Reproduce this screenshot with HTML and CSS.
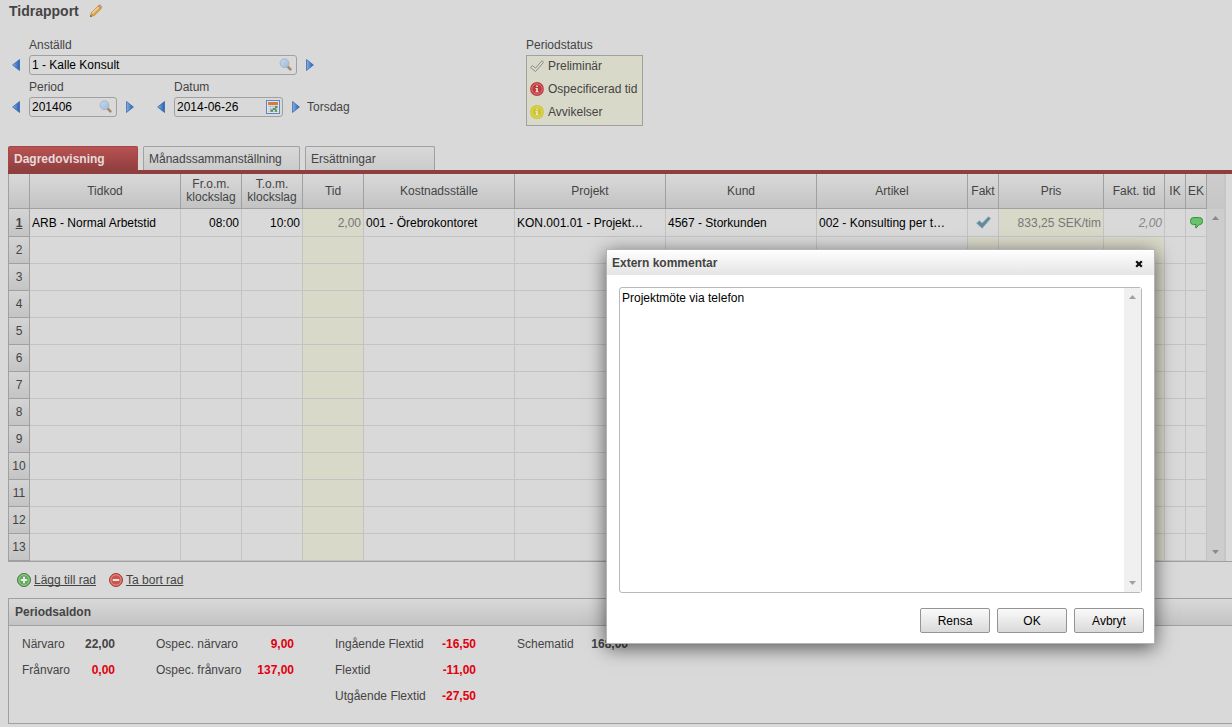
FILE: index.html
```html
<!DOCTYPE html>
<html lang="sv">
<head>
<meta charset="utf-8">
<title>Tidrapport</title>
<link rel="stylesheet" href="styles.css">
</head>
<body>
<svg class="defs" aria-hidden="true">
  <defs>
    <linearGradient id="blue" x1="0" x2="1"><stop offset="0" stop-color="#86b0dd"/><stop offset="1" stop-color="#2560b4"/></linearGradient>
    <linearGradient id="glass" x1="0" y1="0" x2="1" y2="1"><stop offset="0" stop-color="#c6d9ea"/><stop offset="1" stop-color="#9dbcdc"/></linearGradient>
    <symbol id="prev" viewBox="0 0 8 12"><path d="M7.5.5v11L.6 6z" fill="url(#blue)" stroke="#2d62ad" stroke-width=".7"/></symbol>
    <symbol id="next" viewBox="0 0 8 12"><path d="M.5.5v11L7.4 6z" fill="url(#blue)" stroke="#2d62ad" stroke-width=".7"/></symbol>
    <symbol id="search" viewBox="0 0 14 14"><path d="M9 8.800l2.400 2.600" stroke="#a88a68" stroke-width="2.600" stroke-linecap="round"/><circle cx="5.500" cy="5.200" r="4.400" fill="url(#glass)" stroke="#a3b5cc" stroke-width="1"/></symbol>
    <symbol id="up" viewBox="0 0 7 4"><path d="M0 4L3.500 0 7 4z" fill="currentColor"/></symbol>
    <symbol id="down" viewBox="0 0 7 4"><path d="M0 0l3.500 4L7 0z" fill="currentColor"/></symbol>
    <symbol id="info" viewBox="0 0 14 14"><circle cx="7" cy="7" r="6.900" fill="currentColor"/><circle cx="7" cy="7" r="5.200" fill="none" stroke="#fff" stroke-opacity=".4" stroke-width=".8"/><path d="M6.200 3.400h1.600v1.500H6.200zM5.500 5.900h2.300v3.300h.8v1H5.400v-1h.8V7h-.7z" fill="#e4e4dc"/></symbol>
  </defs>
</svg>

<header class="page-title">
  <h1>Tidrapport</h1>
  <svg class="pencil" viewBox="0 0 14 14"><path d="M1.300 12.700l1.200-4L9 2.200c.9-.7 3.600 1.700 2.900 2.700L5.300 11.400z" fill="#dba94f" stroke="#b5853f" stroke-width=".8"/><path d="M3.300 9.300L9.500 3.300" stroke="#f0d596" stroke-width="1.400"/><path d="M9 2.100l1-1c1-.8 3.500 1.300 2.700 2.400l-.9 1.200C11.700 3.600 10.300 2.200 9 2.100z" fill="#d3a488" stroke="#ab8062" stroke-width=".6"/><path d="M1.300 12.700l.4-1.600 1.200 1.100z" fill="#4c4034"/></svg>
</header>

<section class="filters">
  <form class="selectors">
    <div class="stepper">
      <label for="employee">Anställd</label>
      <button class="step" type="button" aria-label="Föregående anställd"><svg><use href="#prev"/></svg></button>
      <div class="field field-wide"><input id="employee" value="1 - Kalle Konsult"><svg class="lens"><use href="#search"/></svg></div>
      <button class="step" type="button" aria-label="Nästa anställd"><svg><use href="#next"/></svg></button>
    </div>
    <div class="selector-row">
      <div class="stepper">
        <label for="period">Period</label>
        <button class="step" type="button" aria-label="Föregående period"><svg><use href="#prev"/></svg></button>
        <div class="field field-period"><input id="period" value="201406"><svg class="lens"><use href="#search"/></svg></div>
        <button class="step" type="button" aria-label="Nästa period"><svg><use href="#next"/></svg></button>
      </div>
      <div class="stepper">
        <label for="date">Datum</label>
        <button class="step" type="button" aria-label="Föregående dag"><svg><use href="#prev"/></svg></button>
        <div class="field field-date"><input id="date" value="2014-06-26"><svg class="calendar" viewBox="0 0 14 14"><rect x=".5" y=".5" width="13" height="13" fill="#dde4ea" stroke="#5f86bd"/><path d="M2 2h10v3H2z" fill="#d9783f"/><path d="M2 6.500h10M2 9h10M2 11.500h10M4.500 5v7M7 5v7M9.500 5v7" stroke="#b5bcc4" stroke-width=".7"/><path d="M9 6h2.500v2.300H9zM7 8h2.500v2H7zM4.500 9.500H7v2.300H4.500zM9 9.500h2v2.300H9z" fill="#4f9456"/></svg></div>
        <button class="step" type="button" aria-label="Nästa dag"><svg><use href="#next"/></svg></button>
      </div>
      <span class="weekday">Torsdag</span>
    </div>
  </form>
  <div class="status">
    <h2>Periodstatus</h2>
    <ul>
      <li><svg class="status-icon" viewBox="0 0 14 14"><path d="M.6 8.500l1.900-1.900 2.900 2.600L12 1.700l1.600 1.600-8.100 9.200z" fill="#dcdcd2" stroke="#8c8c88" stroke-width="1"/></svg>Preliminär</li>
      <li><svg class="status-icon red"><use href="#info"/></svg>Ospecificerad tid</li>
      <li><svg class="status-icon yellow"><use href="#info"/></svg>Avvikelser</li>
    </ul>
  </div>
</section>

<nav class="tabs">
  <button class="tab active" type="button">Dagredovisning</button>
  <button class="tab tab-wide" type="button">Månadssammanställning</button>
  <button class="tab" type="button">Ersättningar</button>
</nav>

<section class="grid">
  <table class="rows">
    <colgroup><col class="c-num"><col><col class="c-time"><col class="c-time"><col class="c-time"><col><col><col><col><col class="c-fakt"><col class="c-price"><col class="c-time"><col class="c-flag"><col class="c-flag"></colgroup>
    <thead>
      <tr><th></th><th>Tidkod</th><th>Fr.o.m. klockslag</th><th>T.o.m. klockslag</th><th>Tid</th><th>Kostnadsställe</th><th>Projekt</th><th>Kund</th><th>Artikel</th><th>Fakt</th><th>Pris</th><th>Fakt. tid</th><th>IK</th><th>EK</th></tr>
    </thead>
    <tbody>
      <tr class="current"><th>1</th><td>ARB - Normal Arbetstid</td><td class="num">08:00</td><td class="num">10:00</td><td class="num calc">2,00</td><td>001 - Örebrokontoret</td><td>KON.001.01 - Projekt…</td><td>4567 - Storkunden</td><td>002 - Konsulting per t…</td><td class="icon"><svg class="tick" viewBox="0 0 15 13"><path d="M.6 7.200L3.300 4.700l2.800 2.600L12.500.7l2.100 1.700-8.400 9.800z" fill="#5f8b9b" stroke="#87a8b2" stroke-width=".8"/></svg></td><td class="num calc">833,25 SEK/tim</td><td class="num estimate">2,00</td><td></td><td class="icon"><svg class="bubble" viewBox="0 0 13 12"><path d="M3.500.6h6a3 3 0 0 1 3 3v1a3 3 0 0 1-3 3H9L6.200 11l-.6-.2.400-3.200H3.500a3 3 0 0 1-3-3v-1a3 3 0 0 1 3-3z" fill="#6cc070" stroke="#2f9238"/></svg></td></tr>
      <tr><th>2</th><td></td><td></td><td></td><td class="calc"></td><td></td><td></td><td></td><td></td><td class="calc"></td><td class="calc"></td><td class="calc"></td><td></td><td></td></tr>
      <tr><th>3</th><td></td><td></td><td></td><td class="calc"></td><td></td><td></td><td></td><td></td><td class="calc"></td><td class="calc"></td><td class="calc"></td><td></td><td></td></tr>
      <tr><th>4</th><td></td><td></td><td></td><td class="calc"></td><td></td><td></td><td></td><td></td><td class="calc"></td><td class="calc"></td><td class="calc"></td><td></td><td></td></tr>
      <tr><th>5</th><td></td><td></td><td></td><td class="calc"></td><td></td><td></td><td></td><td></td><td class="calc"></td><td class="calc"></td><td class="calc"></td><td></td><td></td></tr>
      <tr><th>6</th><td></td><td></td><td></td><td class="calc"></td><td></td><td></td><td></td><td></td><td class="calc"></td><td class="calc"></td><td class="calc"></td><td></td><td></td></tr>
      <tr><th>7</th><td></td><td></td><td></td><td class="calc"></td><td></td><td></td><td></td><td></td><td class="calc"></td><td class="calc"></td><td class="calc"></td><td></td><td></td></tr>
      <tr><th>8</th><td></td><td></td><td></td><td class="calc"></td><td></td><td></td><td></td><td></td><td class="calc"></td><td class="calc"></td><td class="calc"></td><td></td><td></td></tr>
      <tr><th>9</th><td></td><td></td><td></td><td class="calc"></td><td></td><td></td><td></td><td></td><td class="calc"></td><td class="calc"></td><td class="calc"></td><td></td><td></td></tr>
      <tr><th>10</th><td></td><td></td><td></td><td class="calc"></td><td></td><td></td><td></td><td></td><td class="calc"></td><td class="calc"></td><td class="calc"></td><td></td><td></td></tr>
      <tr><th>11</th><td></td><td></td><td></td><td class="calc"></td><td></td><td></td><td></td><td></td><td class="calc"></td><td class="calc"></td><td class="calc"></td><td></td><td></td></tr>
      <tr><th>12</th><td></td><td></td><td></td><td class="calc"></td><td></td><td></td><td></td><td></td><td class="calc"></td><td class="calc"></td><td class="calc"></td><td></td><td></td></tr>
      <tr><th>13</th><td></td><td></td><td></td><td class="calc"></td><td></td><td></td><td></td><td></td><td class="calc"></td><td class="calc"></td><td class="calc"></td><td></td><td></td></tr>
    </tbody>
  </table>
  <div class="grid-side">
    <div class="grid-corner"></div>
    <div class="scrollbar"><svg><use href="#up"/></svg><svg><use href="#down"/></svg></div>
  </div>
</section>

<div class="row-actions">
  <a href="#add"><svg viewBox="0 0 14 14"><circle cx="7" cy="7" r="6.500" fill="#67a860" stroke="#3f7f3d"/><circle cx="7" cy="7" r="5.200" fill="none" stroke="#a8cfa2" stroke-width=".8"/><path d="M7 3.800v6.400M3.800 7h6.400" stroke="#e6eee4" stroke-width="2"/></svg><span>Lägg till rad</span></a>
  <a href="#remove"><svg viewBox="0 0 14 14"><circle cx="7" cy="7" r="6.500" fill="#cc564d" stroke="#a53c38"/><circle cx="7" cy="7" r="5.200" fill="none" stroke="#e2a098" stroke-width=".8"/><path d="M3.800 7h6.400" stroke="#f0e4e2" stroke-width="2"/></svg><span>Ta bort rad</span></a>
</div>

<section class="balances">
  <h2>Periodsaldon</h2>
  <div class="balance-groups">
    <table class="attendance">
      <tr><th>Närvaro</th><td>22,00</td></tr>
      <tr><th>Frånvaro</th><td class="alert">0,00</td></tr>
    </table>
    <table class="unspecified">
      <tr><th>Ospec. närvaro</th><td class="alert">9,00</td></tr>
      <tr><th>Ospec. frånvaro</th><td class="alert">137,00</td></tr>
    </table>
    <table class="flex-time">
      <tr><th>Ingående Flextid</th><td class="alert">-16,50</td></tr>
      <tr><th>Flextid</th><td class="alert">-11,00</td></tr>
      <tr><th>Utgående Flextid</th><td class="alert">-27,50</td></tr>
    </table>
    <table class="schedule">
      <tr><th>Schematid</th><td>168,00</td></tr>
    </table>
  </div>
</section>

<div class="dialog" role="dialog" aria-labelledby="dialog-title">
  <div class="dialog-head">
    <h2 id="dialog-title">Extern kommentar</h2>
    <button class="close" type="button" aria-label="Stäng"><svg viewBox="0 0 8 8"><path d="M1.200 1.200l5.600 5.600M6.800 1.200L1.200 6.800" stroke="#111" stroke-width="2.300"/></svg></button>
  </div>
  <div class="dialog-body">
    <div class="comment">
      <textarea aria-labelledby="dialog-title">Projektmöte via telefon</textarea>
      <div class="scrollbar"><svg><use href="#up"/></svg><svg><use href="#down"/></svg></div>
    </div>
  </div>
  <div class="dialog-actions">
    <button type="button">Rensa</button>
    <button type="button">OK</button>
    <button type="button">Avbryt</button>
  </div>
</div>
</body>
</html>
```
FILE: styles.css
```css
* { box-sizing: border-box; }

body {
  margin: 0;
  padding: 0 0 3px 8px;
  background: #d9d9d9;
  color: #444;
  font: 12px/16px "Liberation Sans", Arial, sans-serif;
}

h1, h2, ul { margin: 0; padding: 0; }
h2 { font-size: 12px; }
button, input, textarea { font: inherit; }
svg { display: block; }
.defs { position: absolute; width: 0; height: 0; }

/* Title */
.page-title { display: flex; align-items: center; gap: 10px; height: 22px; padding-left: 1px; }
.page-title h1 { font-size: 14px; line-height: 22px; }
.pencil { width: 14px; height: 14px; }

/* Selectors */
.filters { display: flex; align-items: flex-start; margin-top: 13px; }
.selectors { display: flex; flex-direction: column; gap: 2px; width: 518px; padding-left: 4px; }
.selector-row { display: flex; align-items: flex-end; gap: 23px; }
.stepper {
  display: grid;
  grid-template-columns: 8px auto 8px;
  grid-template-rows: 20px 20px;
  column-gap: 9px;
  align-items: center;
  justify-content: start;
}
.stepper label { grid-column: 2 / 4; }
.step { width: 8px; height: 12px; padding: 0; border: 0; background: none; }
.step svg { width: 8px; height: 12px; }
.field {
  display: flex;
  align-items: center;
  height: 20px;
  padding: 0 3px 0 2px;
  border: 1px solid #a0a0a0;
  border-radius: 3px;
}
.field input {
  flex: 1;
  min-width: 0;
  height: 18px;
  padding: 0;
  border: 0;
  outline: 0;
  background: none;
  color: #000;
}
.field-wide { width: 268px; }
.field-period { width: 88px; }
.field-date { width: 109px; padding-right: 2px; }
.lens { width: 14px; height: 14px; }
.calendar { width: 14px; height: 14px; }
.weekday { margin-left: -16px; line-height: 20px; }

/* Period status */
.status h2 { font-weight: normal; line-height: 20px; }
.status ul { width: 117px; padding-bottom: 3px; border: 1px solid #a0a0a0; background: #d9d9c9; list-style: none; }
.status li { display: flex; align-items: center; gap: 4px; height: 20px; padding: 0 2px 0 3px; white-space: nowrap; }
.status li + li { height: 20px; margin-top: 3px; }
.status-icon { width: 14px; height: 14px; }
.red { color: #c0393f; }
.yellow { color: #cfc62a; }

/* Tabs */
.tabs { display: flex; gap: 5px; margin-top: 20px; border-bottom: 4px solid #903f3f; }
.tab {
  min-width: 130px;
  height: 24px;
  padding: 0 8px 0 5px;
  border: 1px solid #a0a0a0;
  border-bottom: 0;
  border-radius: 2px 2px 0 0;
  background: linear-gradient(#d9d9d9, #cbcbcb);
  color: #444;
  text-align: left;
}
.tab-wide { min-width: 157px; }
.tab.active {
  border-color: #a34646;
  background: linear-gradient(#b95252, #903f3f);
  color: #e6dada;
  font-weight: bold;
}

/* Time rows */
.grid { display: flex; padding-right: 6px; border-bottom: 1px solid #a0a0a0; }
.rows { flex: 1; width: 0; table-layout: fixed; border-collapse: separate; border-spacing: 0; }
.c-num { width: 22px; }
.c-time { width: 61px; }
.c-fakt { width: 31px; }
.c-price { width: 105px; }
.c-flag { width: 21px; }
.rows th, .rows td { padding: 0 2px; overflow: hidden; white-space: nowrap; }
.rows th { font-weight: normal; border: solid #a0a0a0; border-width: 0 1px 1px 0; }
.rows th:first-child { border-left-width: 1px; }
.rows thead th {
  height: 35px;
  padding: 0;
  background: linear-gradient(#d9d9d9, #c3c3c3);
  line-height: 13px;
  white-space: normal;
}
.rows tbody th { height: 27px; padding: 0; background: linear-gradient(#d4d4d4, #c4c4c4); }
.rows td { border: solid #c3c3c3; border-width: 0 1px 1px 0; color: #000; }
.rows .current th { height: 28px; font-weight: bold; text-decoration: underline; }
.rows .num { text-align: right; }
.rows .calc { background: #d9d9c9; color: #777; }
.rows .estimate { color: #888; font-style: italic; }
.rows .icon { padding: 0; }
.icon svg { margin: 0 auto; }
.tick { width: 15px; height: 13px; }
.bubble { width: 13px; height: 12px; }

.grid-side { display: flex; flex-direction: column; width: 19px; border-right: 2px solid #c6c6c6; background: #cdcdcd; }
.grid-corner { height: 35px; background: linear-gradient(#cdcdcd, #c6c6c6); }
.scrollbar {
  display: flex;
  flex: 1;
  flex-direction: column;
  align-items: center;
  justify-content: space-between;
  padding: 7px 0;
  color: #8a8a8a;
}
.scrollbar svg { width: 7px; height: 4px; }

/* Add and remove */
.row-actions { display: flex; gap: 13px; padding: 9px 0 10px 9px; }
.row-actions a { display: flex; align-items: center; gap: 3px; height: 17px; color: #444; text-decoration: none; }
.row-actions span { text-decoration: underline; text-decoration-skip-ink: none; }
.row-actions svg { width: 14px; height: 14px; }

/* Balances */
.balances { border: solid #a0a0a0; border-width: 1px 0 1px 1px; }
.balances h2 {
  padding-left: 6px;
  border-bottom: 1px solid #a0a0a0;
  background: linear-gradient(#d9d9d9, #c3c3c3);
  line-height: 26px;
}
.balance-groups { display: flex; align-items: flex-start; gap: 41px; padding: 5px 13px 14px; }
.balance-groups table { border-collapse: collapse; white-space: nowrap; }
.balance-groups th { height: 26px; padding: 0; font-weight: normal; text-align: left; }
.balance-groups td { padding: 0; font-weight: bold; text-align: right; }
.balance-groups .alert { color: #e0000d; }
.attendance { width: 93px; }
.unspecified { width: 138px; }
.flex-time { width: 141px; }
.schedule { width: 111px; }

/* Comment dialog, floating over the page */
.dialog {
  position: absolute;
  top: 249px;
  left: 606px;
  width: 549px;
  border: 1px solid #b4b4b4;
  background: #fff;
  box-shadow: 0 4px 18px rgba(0, 0, 0, 0.6);
}
.dialog-head {
  display: flex;
  align-items: center;
  justify-content: space-between;
  height: 25px;
  padding: 0 11px 0 5px;
  background: linear-gradient(#fff, #e4e4e4);
}
.close { padding: 3px 0 0; border: 0; background: none; }
.close svg { width: 8px; height: 8px; }
.dialog-body { padding: 12px 12px 15px; }
.comment { display: flex; height: 306px; border: 1px solid #b8b8b8; border-radius: 3px; }
.comment textarea {
  flex: 1;
  padding: 2px;
  border: 0;
  outline: 0;
  background: none;
  color: #000;
  resize: none;
  overflow: hidden;
}
.comment .scrollbar { flex: 0 0 17px; background: #f0f0f0; color: #a0a0a0; }
.dialog-actions { display: flex; justify-content: flex-end; gap: 7px; padding: 0 10px 10px; }
.dialog-actions button {
  width: 70px;
  height: 25px;
  padding: 0;
  border: 1px solid #949494;
  border-radius: 2px;
  background: linear-gradient(#fafafa, #dadada);
  color: #000;
}
```
